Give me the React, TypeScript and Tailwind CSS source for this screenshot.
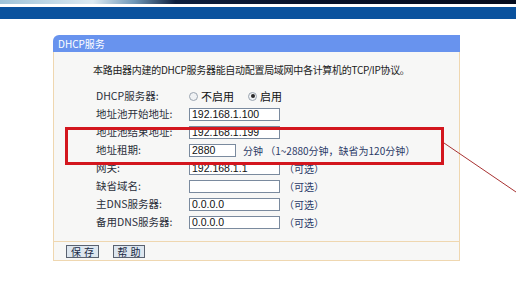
import React from "react"

const cjk = "font-['SimSun','Noto_Sans_CJK_SC',sans-serif]"
const latin = "font-['Liberation_Sans',Arial,sans-serif]"

function Field({ value, width = "w-[91px]" }: { value: string; width?: string }) {
  return (
    <div
      className={`${width} h-[13px] border border-[#7a8a9e] bg-white flex items-center pl-[2px] text-[10.5px] leading-none text-[#111] ${latin}`}
    >
      {value}
    </div>
  )
}

function Radio({ checked }: { checked?: boolean }) {
  return (
    <span className="w-[9px] h-[9px] rounded-full border border-[#9aa4b0] bg-[#f0f2f4] flex items-center justify-center">
      {checked && <span className="w-[4px] h-[4px] rounded-full bg-[#2a2a2a]" />}
    </span>
  )
}

export default function App() {
  const rows: { label: string; value: string; note?: string; width?: string }[] = [
    { label: "地址池开始地址:", value: "192.168.1.100" },
    { label: "地址池结束地址:", value: "192.168.1.199" },
    { label: "地址租期:", value: "2880", width: "w-[47px]" },
    { label: "网关:", value: "192.168.1.1", note: "（可选）" },
    { label: "缺省域名:", value: "", note: "（可选）" },
    { label: "主DNS服务器:", value: "0.0.0.0", note: "（可选）" },
    { label: "备用DNS服务器:", value: "0.0.0.0", note: "（可选）" },
  ]

  return (
    <div className={`relative w-[516px] h-[294px] bg-white overflow-hidden ${cjk}`}>
      {/* banner */}
      <div className="h-[4px] bg-[linear-gradient(to_right,#9fc3d8,#dceaf2_18%,#6f98b8_26%,#0d1f3e_34%,#07122a_60%,#050c1e)]" />
      <div className="h-[3px] bg-white" />
      <div className="h-[12px] bg-[#0a529e]" />

      {/* panel */}
      <div className="ml-[53px] mt-[16px] w-[407px]">
        <div className="h-[17px] bg-[#6893ee] rounded-tl-[6px] flex items-center pl-[5px] text-[10px] text-white leading-none">
          DHCP服务
        </div>
        <div className="border-x border-b border-[#efd7b0] bg-[#f7f7f6]">
          <div className="pt-[11px] pl-[39px] h-[35px] text-[10px] leading-[14px] text-[#222] whitespace-nowrap tracking-[-0.3px]">
            本路由器内建的DHCP服务器能自动配置局域网中各计算机的TCP/IP协议。
          </div>

          <div className="pl-[42px] text-[10.5px] text-[#2b2f3a]">
            <div className="h-[18px] flex items-center">
              <div className="w-[93px]">DHCP服务器:</div>
              <div className="flex items-center gap-[3px]">
                <Radio />
                <span className="text-[11px] text-[#111]">不启用</span>
                <span className="w-[8px]" />
                <Radio checked />
                <span className="text-[11px] text-[#111]">启用</span>
              </div>
            </div>
            {rows.map((r) => (
              <div key={r.label} className="h-[18px] flex items-center">
                <div className="w-[93px] whitespace-nowrap">{r.label}</div>
                <Field value={r.value} width={r.width} />
                {r.label === "地址租期:" && (
                  <span className="ml-[7px] whitespace-nowrap text-[10px] text-[#2b3a66]">
                    分钟 （1~2880分钟，缺省为120分钟）
                  </span>
                )}
                {r.note && (
                  <span className="ml-[4px] text-[10px] text-[#2b3a66]">{r.note}</span>
                )}
              </div>
            ))}
          </div>

          <div className="mt-[10px] border-t border-[#efd7b0] h-[19px] flex items-start pt-[3px] pl-[12px] gap-[14px]">
            <button className="w-[33px] h-[13px] border border-[#5a6270] bg-[#dde6ef] text-[10px] leading-none text-[#1a2a44] tracking-[3px] pl-[3px]">
              保存
            </button>
            <button className="w-[32px] h-[13px] border border-[#5a6270] bg-[#dde6ef] text-[10px] leading-none text-[#1a2a44] tracking-[3px] pl-[3px]">
              帮助
            </button>
          </div>
        </div>
      </div>

      {/* annotation */}
      <div className="absolute left-[65px] top-[127px] w-[379px] h-[38px] border-[3px] border-[#d3161e]" />
      <svg className="absolute left-0 top-0" width="516" height="294">
        <line x1="444" y1="143" x2="516" y2="192" stroke="#a83232" strokeWidth="1" />
      </svg>
    </div>
  )
}
